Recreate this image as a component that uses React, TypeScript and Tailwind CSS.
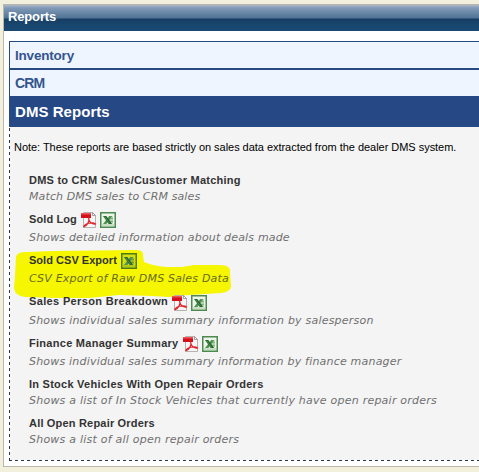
import React from "react";

type Report = {
  title: string;
  description: string;
  pdf?: boolean;
  excel?: boolean;
  titleClass: string;
  textClass: string;
  rowClass: string;
};

const reports: Report[] = [
  { title: "DMS to CRM Sales/Customer Matching", description: "Match DMS sales to CRM sales", titleClass: "tracking-[0.24px]", textClass: "tracking-[0.12px]", rowClass: "h-[39px]" },
  { title: "Sold Log", description: "Shows detailed information about deals made", pdf: true, excel: true, titleClass: "tracking-[0.1px] pb-[2px]", textClass: "tracking-[0.17px]", rowClass: "h-[41px]" },
  { title: "Sold CSV Export", description: "CSV Export of Raw DMS Sales Data", excel: true, titleClass: "tracking-[0.03px] pb-[2px]", textClass: "tracking-[0.19px]", rowClass: "h-[42px]" },
  { title: "Sales Person Breakdown", description: "Shows individual sales summary information by salesperson", pdf: true, excel: true, titleClass: "tracking-[0.35px] pb-[4px]", textClass: "tracking-[0.21px]", rowClass: "h-[41px]" },
  { title: "Finance Manager Summary", description: "Shows individual sales summary information by finance manager", pdf: true, excel: true, titleClass: "tracking-[0.28px] pb-[2px]", textClass: "tracking-[0.2px]", rowClass: "h-[41px]" },
  { title: "In Stock Vehicles With Open Repair Orders", description: "Shows a list of In Stock Vehicles that currently have open repair orders", titleClass: "tracking-[0.25px]", textClass: "tracking-[0.235px]", rowClass: "h-[39px]" },
  { title: "All Open Repair Orders", description: "Shows a list of all open repair orders", titleClass: "tracking-[0.19px]", textClass: "tracking-[0.23px]", rowClass: "h-[39px]" },
];

function PdfIcon() {
  return (
    <svg width="16" height="16" viewBox="0 0 16 16" className="shrink-0">
      <path d="M2.500.5h9l3 3v12h-12z" fill="#f7f5f5" stroke="#b5b2b2" />
      <path d="M11.500.5v3h3z" fill="#fff" stroke="#8f8c8c" strokeWidth=".8" />
      <path d="M0 1h10v5H0z" fill="#d4101a" />
      <path d="M0 1h10v1.500H0z" fill="#ee5356" />
      <path d="M7.500 5.500c1 1.800.6 3.700-.7 5.900-1.200 2-2.700 3.700-4.100 3.300.4-1.600 2.600-3 5.100-3.500 2.700-.5 5.600-.3 6.700.7-1.500.8-4.200-.4-5.600-2.300-.9-1.200-1.500-2.700-1.400-4.100z" fill="none" stroke="#df2329" strokeWidth="1.100" />
    </svg>
  );
}

function ExcelIcon({ marked }: { marked?: boolean }) {
  return (
    <svg width="16" height="16" viewBox="0 0 16 16" className="shrink-0">
      <path d="M.75.75h14.500v14.500H.75z" fill={marked ? "#d3df12" : "#edf4e9"} stroke={marked ? "#4f7a14" : "#4c8a4f"} strokeWidth="1.500" />
      <path d="M2 12h12v2H2z" fill={marked ? "#b2c61c" : "#c9dec2"} />
      <path d="M8.500 4.500H13v7H8.500z" fill={marked ? "#a4b924" : "#b5d0b0"} />
      <path d="M9 6.500h4M9 9.500h4" stroke={marked ? "#6f8d20" : "#7ca67a"} strokeWidth=".8" />
      <path d="M9.300 4h3L6.400 12H3z" fill="#4f9350" />
      <path d="M3 4h3.300l5.900 8H8.700z" fill="#22662e" />
      <path d="M4.600 4.700l5 6.600" stroke="#75ab6c" strokeWidth=".6" />
    </svg>
  );
}

function Highlight() {
  return (
    <svg className="absolute -left-[15px] -top-[2px]" width="220" height="54" viewBox="0 0 220 54">
      <path d="M2 7C3 3 7 2 13 2L40 1L122 0Q130 0 129 6L130 12Q139 16 152 17L168 17L180 15L205 15Q217 15 216 22L217 37Q216 42 207 43L175 45L155 47L138 46L105 45L75 48L43 48L11 47Q1 46 0 38L1 26Z" fill="#f6f600" />
    </svg>
  );
}

export default function App() {
  return (
    <div className="h-[472px] w-[479px] overflow-hidden bg-[#f2f0dc] pl-[3px] pt-1 font-['Liberation_Sans',Arial,sans-serif]">
      <main className="h-[463px] border-y border-l border-[#b9b8aa] bg-white">
        <header className="h-[26px] bg-[linear-gradient(to_bottom,#a9b8c8_0px,#8199b7_3px,#507395_13px,#173d63_14px,#18466f_20px,#194970_26px)] pl-[4px] text-[13px] leading-[24px] font-bold text-white">
          <h1 className="tracking-[-0.15px]">Reports</h1>
        </header>
        <section className="ml-[5px] mt-[10px]">
          <div className="border-l border-t border-[#284a83] bg-[#eef5ff] font-bold text-[#34558f]">
            <h2 className="h-[28px] border-b-2 border-[#284a83] pl-[5px] text-[13.5px] leading-[27px] tracking-[-0.2px]">Inventory</h2>
            <h2 className="h-[26px] pl-[5px] text-[14px] leading-[27px] font-bold tracking-[-0.9px]">CRM</h2>
            <h2 className="h-[31px] bg-[#264885] pl-[5px] text-[15px] leading-[31px] tracking-[0.05px] text-white">DMS Reports</h2>
          </div>
          <div className="relative h-[334px] bg-[#f4f4f4] pl-[5px] pt-[13px]">
            <div className="absolute inset-y-0 left-0 w-px bg-[repeating-linear-gradient(to_top,#2a3546_0px,#2a3546_3px,#fff_3px,#fff_6px)]" />
            <div className="absolute inset-x-0 bottom-0 h-px bg-[repeating-linear-gradient(to_right,#2a3546_0px,#2a3546_3px,#fff_3px,#fff_6px)]" />
            <p className="h-[32px] whitespace-nowrap text-[11px] leading-[14px] tracking-[-0.035px] text-black">Note: These reports are based strictly on sales data extracted from the dealer DMS system.</p>
            <div className="pl-[15px]">
              {reports.map((r) => {
                const marked = r.title === "Sold CSV Export";
                const icons = r.pdf || r.excel;
                return (
                  <article key={r.title} className={`relative ${r.rowClass}`}>
                    {marked && <Highlight />}
                    <div className={`relative flex items-center whitespace-nowrap text-[11px] font-bold text-[#333] ${icons ? "h-[18px]" : "h-4"}`}>
                      <h3 className={`leading-[16px] ${r.titleClass}`}>{r.title}</h3>
                      {icons && <span className="ml-1 flex gap-[3px]">{r.pdf && <PdfIcon />}{r.excel && <ExcelIcon marked={marked} />}</span>}
                    </div>
                    <p className={`relative w-max whitespace-nowrap font-['DejaVu_Sans',Verdana,sans-serif] text-[11px] leading-[18px] italic ${marked ? "text-[#666b20]" : "text-[#707070]"} ${r.textClass}`}>{r.description}</p>
                  </article>
                );
              })}
            </div>
          </div>
        </section>
      </main>
    </div>
  );
}
